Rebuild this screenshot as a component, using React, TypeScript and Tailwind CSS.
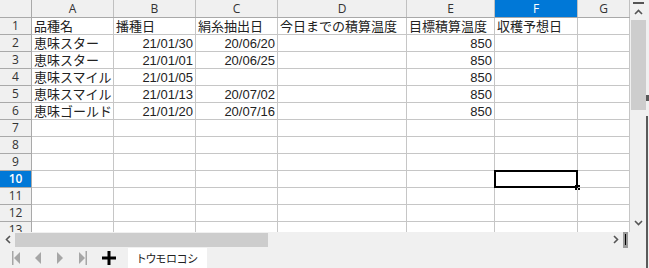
import React from 'react';

type Col = { label: string; w: string; align: 'left' | 'right' };

const COLS: Col[] = [
  { label: 'A', w: 'w-[82px]', align: 'left' },
  { label: 'B', w: 'w-[82px]', align: 'right' },
  { label: 'C', w: 'w-[82px]', align: 'right' },
  { label: 'D', w: 'w-[129px]', align: 'right' },
  { label: 'E', w: 'w-[88px]', align: 'right' },
  { label: 'F', w: 'w-[83px]', align: 'left' },
  { label: 'G', w: 'w-[52px]', align: 'left' },
];

const DATA: string[][] = [
  ['品種名', '播種日', '絹糸抽出日', '今日までの積算温度', '目標積算温度', '収穫予想日', ''],
  ['恵味スター', '21/01/30', '20/06/20', '', '850', '', ''],
  ['恵味スター', '21/01/01', '20/06/25', '', '850', '', ''],
  ['恵味スマイル', '21/01/05', '', '', '850', '', ''],
  ['恵味スマイル', '21/01/13', '20/07/02', '', '850', '', ''],
  ['恵味ゴールド', '21/01/20', '20/07/16', '', '850', '', ''],
];

const ROWS = 13;
const SEL_ROW = 10;
const SEL_COL = 5;

const NavIcon = ({ dir, bar }: { dir: 'l' | 'r'; bar?: boolean }) => (
  <svg width="10" height="14" viewBox="0 0 10 14" className="shrink-0">
    {dir === 'l' ? (
      <>
        {bar && <rect x="0" y="0" width="1.5" height="14" fill="#a6a6a6" />}
        <polygon points="8,1 2,7 8,13" fill="#a6a6a6" />
      </>
    ) : (
      <>
        <polygon points="2,1 8,7 2,13" fill="#a6a6a6" />
        {bar && <rect x="8.5" y="0" width="1.5" height="14" fill="#a6a6a6" />}
      </>
    )}
  </svg>
);

const Chevron = ({ d }: { d: string }) => (
  <svg width="9" height="6" viewBox="0 0 9 6">
    <path d={d} fill="none" stroke="#555" strokeWidth="1.6" />
  </svg>
);

export default function App() {
  return (
    <div className="w-[649px] h-[268px] overflow-hidden bg-[#f0f0f0] flex flex-col font-['Liberation_Sans','Noto_Sans_CJK_JP',sans-serif]">
      <div className="flex h-[232px] shrink-0">
        {/* grid */}
        <div className="w-[630px] h-[232px] overflow-hidden bg-white shrink-0">
          {/* column header */}
          <div className="flex h-[18px] bg-[#f0f0f0] border-b border-[#a9a9a9]">
            <div className="w-[32px] shrink-0 border-r border-[#a9a9a9]" />
            {COLS.map((c, i) => (
              <div
                key={c.label}
                className={`${c.w} shrink-0 border-r border-[#c0c0c0] flex items-center justify-center text-[12px] leading-none font-['Open_Sans',sans-serif] ${
                  i === SEL_COL ? 'bg-[#0078d7] text-white' : 'text-[#333]'
                }`}
              >
                {c.label}
              </div>
            ))}
          </div>
          {Array.from({ length: ROWS }, (_, r) => {
            const rowNo = r + 1;
            const row = DATA[r];
            return (
              <div key={rowNo} className="flex h-[17px]">
                <div
                  className={`w-[32px] shrink-0 border-r border-b border-[#a9a9a9] flex items-center justify-center text-[12px] leading-none font-['Open_Sans',sans-serif] ${
                    rowNo === SEL_ROW ? 'bg-[#0078d7] text-white font-semibold' : 'bg-[#f0f0f0] text-[#333]'
                  }`}
                >
                  {rowNo}
                </div>
                {COLS.map((c, ci) => {
                  const v = row ? row[ci] : '';
                  const isHead = rowNo === 1;
                  const sel = rowNo === SEL_ROW && ci === SEL_COL;
                  return (
                    <div
                      key={c.label}
                      className={`${c.w} shrink-0 relative border-r border-b border-[#c6c6c6] flex items-center px-[2px] text-[13px] leading-none text-[#222] whitespace-nowrap ${
                        !isHead && c.align === 'right' ? 'justify-end' : 'justify-start'
                      }`}
                    >
                      {v}
                      {sel && (
                        <>
                          <div className="absolute -left-px -top-px w-[84px] h-[18px] border-2 border-black" />
                          <div className="absolute -right-[3px] -bottom-[3px] w-[5px] h-[5px] bg-black" />
                        </>
                      )}
                    </div>
                  );
                })}
              </div>
            );
          })}
        </div>
        {/* vertical scrollbar */}
        <div className="w-[19px] h-[232px] relative flex flex-col items-center">
          <div className="w-[11px] h-[2px] bg-[#555] mt-[2px] mr-[3px]" />
          <div className="h-[16px] flex items-center mr-[3px]">
            <Chevron d="M1 5 L4.5 1.5 L8 5" />
          </div>
          <div className="w-[15px] h-[90px] bg-[#cdcdcd] mr-[3px]" />
          <div className="flex-1" />
          <div className="h-[14px] flex items-center mr-[3px] mb-[2px]">
            <Chevron d="M1 1 L4.5 4.5 L8 1" />
          </div>
          <div className="absolute right-px top-[116px] bottom-0 w-[2px] bg-[#5a5a5a]" />
          <div className="absolute right-0 top-[95px] w-[3px] h-[6px] bg-[#5a5a5a]" />
        </div>
      </div>
      {/* horizontal scrollbar */}
      <div className="h-[15px] flex items-center shrink-0 relative">
        <div className="w-[15px] flex justify-center">
          <svg width="6" height="9" viewBox="0 0 6 9">
            <path d="M5 1 L1.5 4.5 L5 8" fill="none" stroke="#555" strokeWidth="1.6" />
          </svg>
        </div>
        <div className="w-[253px] h-[14px] bg-[#cdcdcd]" />
        <div className="flex-1" />
        <svg width="6" height="9" viewBox="0 0 6 9" className="mr-[4px]">
          <path d="M1 1 L4.5 4.5 L1 8" fill="none" stroke="#555" strokeWidth="1.6" />
        </svg>
        <div className="w-[5px] h-[16px] bg-[#9a9a9a] flex justify-center items-center mr-[21px]">
          <div className="w-px h-[11px] bg-black" />
        </div>
        <div className="absolute right-px top-0 bottom-0 w-[2px] bg-[#5a5a5a]" />
      </div>
      {/* sheet tabs */}
      <div className="flex-1 flex items-end relative">
        <div className="h-[20px] flex items-center">
          <div className="w-[12px]" />
          <NavIcon dir="l" bar />
          <div className="w-[11px]" />
          <NavIcon dir="l" />
          <div className="w-[12px]" />
          <NavIcon dir="r" />
          <div className="w-[12px]" />
          <NavIcon dir="r" bar />
          <div className="w-[14px]" />
          <svg width="16" height="16" viewBox="0 0 16 16">
            <rect x="1" y="6.5" width="14" height="3" fill="#000" />
            <rect x="6.5" y="1" width="3" height="14" fill="#000" />
          </svg>
          <div className="w-[11px]" />
          <div className="w-[79px] h-[20px] bg-white flex items-center justify-center text-[11px] leading-none text-[#222] font-['Noto_Sans_CJK_JP',sans-serif] [font-feature-settings:'palt']">
            トウモロコシ
          </div>
        </div>
        <div className="absolute right-px top-0 bottom-0 w-[2px] bg-[#5a5a5a]" />
      </div>
    </div>
  );
}
